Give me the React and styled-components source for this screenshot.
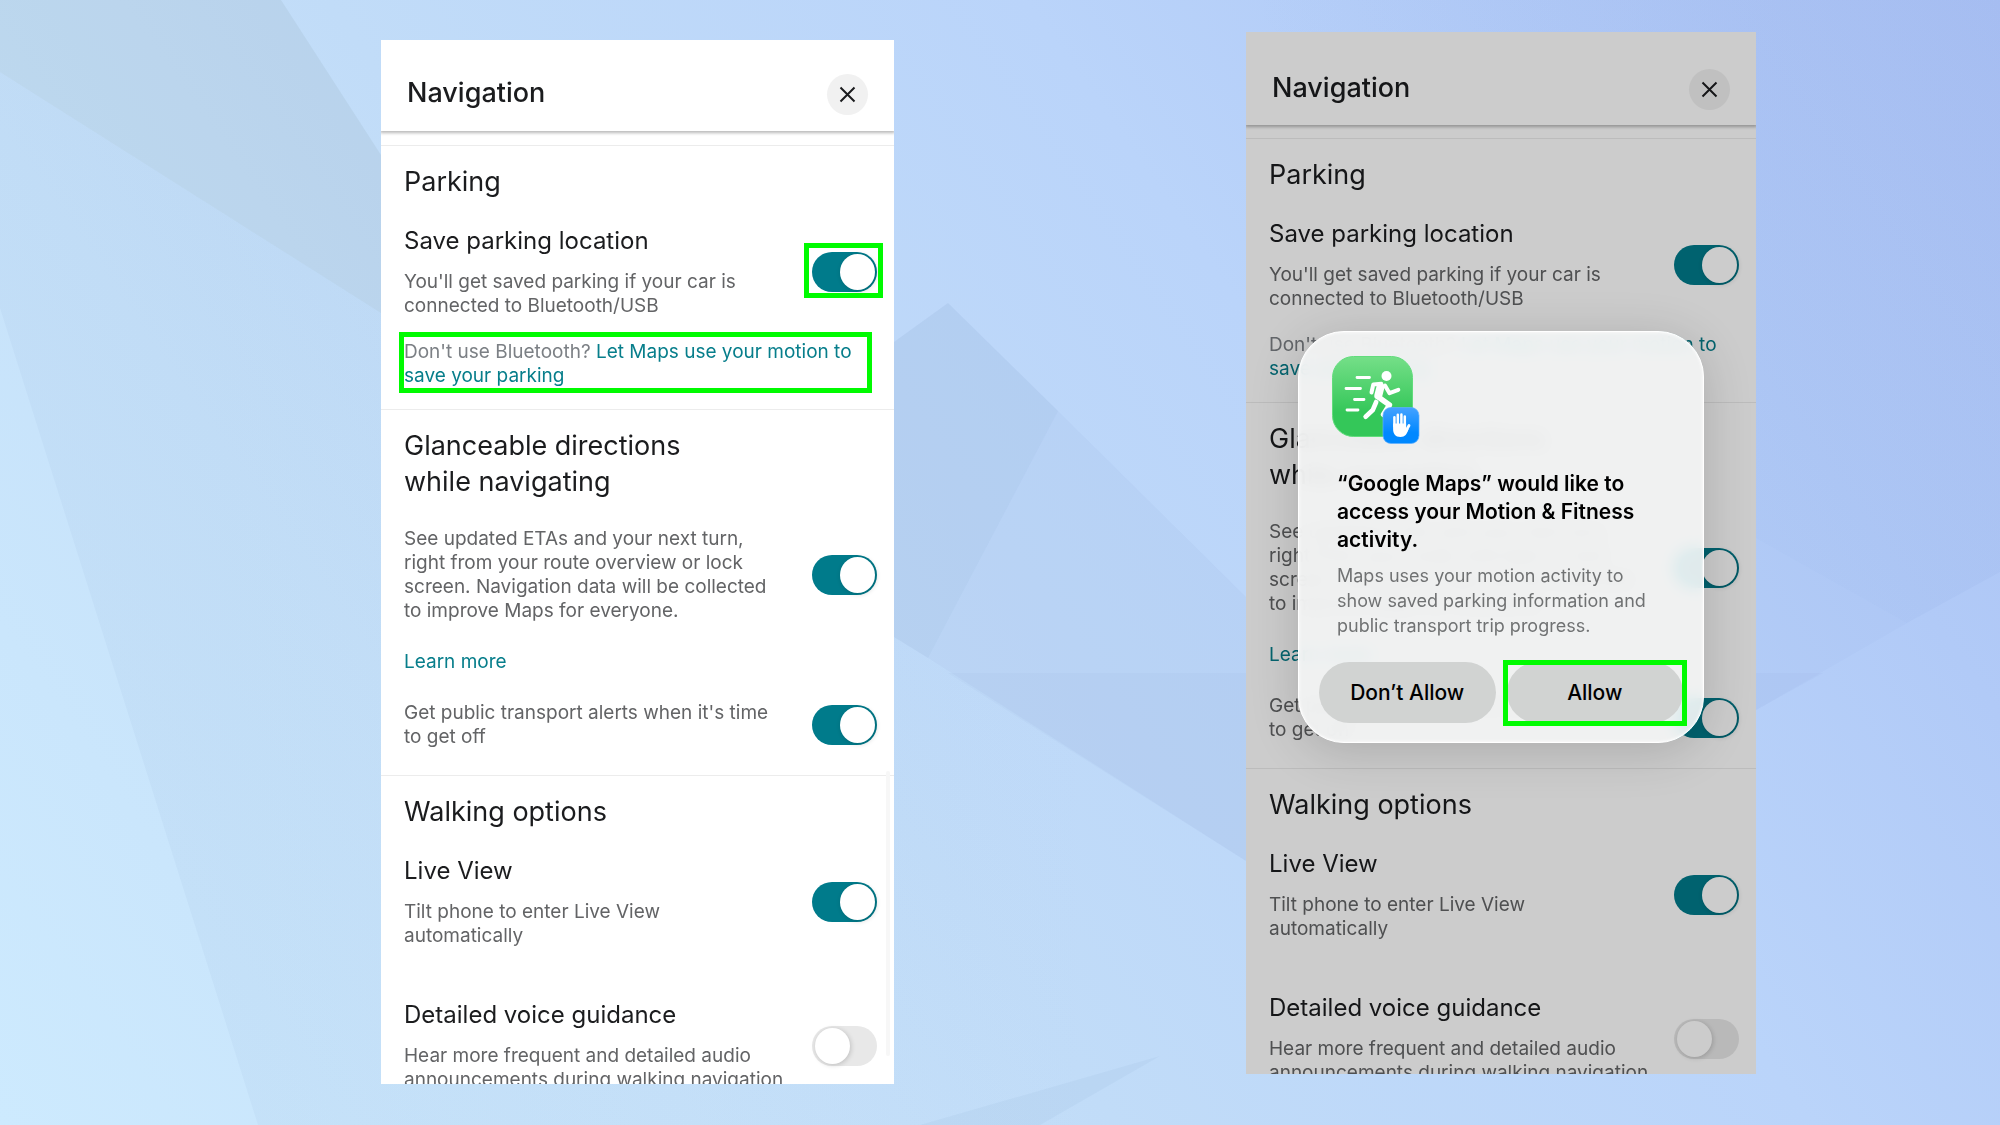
import React, { useId, useState } from "react";
import styled, { createGlobalStyle, css } from "styled-components";

const GlobalStyle = createGlobalStyle`
  *, *::before, *::after { box-sizing: border-box; }
  body { margin: 0; }
  h1, h2, h3, p { margin: 0; font-weight: 400; }
`;

const highlightFrame = css`
  &::after {
    content: "";
    position: absolute;
    border: 5px solid #00fb00;
    pointer-events: none;
  }
`;

const Stage = styled.main`
  position: relative;
  display: grid;
  grid-template-columns: 513fr 510fr;
  column-gap: 25.6%;
  height: 100vh;
  padding: 0 12.2% 0 19.05%;
  overflow: hidden;
  background: linear-gradient(55deg, #cdeafe 0%, #c7e2fa 25%, #c1dcf8 40%, #bad4fa 65%, #b1caf7 82%, #aac1f4 100%);
  color: #1b1c1e;
  font-family: Inter, Roboto, "Liberation Sans", sans-serif;
`;

const Backdrop = styled.svg`
  position: absolute;
  inset: 0;
  width: 100%;
  height: 100%;
`;

const Screen = styled.section`
  position: relative;
  min-height: 0;
  margin: ${(p) => (p.$lifted ? "32px 0 51px" : "40px 0 41px")};
  overflow: hidden;
  background: #fff;
`;

const Header = styled.header`
  display: flex;
  justify-content: space-between;
  align-items: flex-start;
  padding: ${(p) => (p.$tall ? "37px 26px 15px" : "34px 26px 16px")};
  box-shadow: 0 1px 3px 1px rgba(0, 0, 0, 0.28);
`;

const Title = styled.h1`
  font-size: 27px;
  line-height: 38px;
  font-weight: 500;
`;

const CloseButton = styled.button`
  display: grid;
  place-items: center;
  width: 41px;
  height: 41px;
  padding: 0;
  border: 0;
  border-radius: 50%;
  background: #f1f1f1;
  color: #1b1c1e;
`;

const Body = styled.div`
  padding-top: ${(p) => (p.$tall ? 13 : 14)}px;
`;

const Section = styled.section`
  display: flex;
  flex-direction: column;
  gap: ${(p) => p.$gap}px;
  padding: 18px 17px ${(p) => p.$end}px 23px;
  border-top: 1px solid #ececec;
`;

const Group = styled.div`
  display: flex;
  flex-direction: column;
  gap: ${(p) => p.$gap}px;
`;

const Heading = styled.h2`
  font-size: 27px;
  line-height: 36px;
  white-space: pre-line;
`;

const Row = styled.div`
  display: grid;
  grid-template-columns: 1fr 65px;
  align-items: center;
`;

const RowLabel = styled.label`
  display: block;
  margin-bottom: 13px;
  font-size: 24px;
  line-height: 32px;
`;

const Description = styled.p`
  color: #636466;
  font-size: 19px;
  line-height: 24px;
  white-space: pre-line;
`;

const TextLink = styled.a`
  color: #077e8b;
  font-size: 19px;
  line-height: 24px;
  text-decoration: none;
`;

const MotionPrompt = styled.p`
  position: relative;
  color: #7c8085;
  font-size: 19px;
  line-height: 24px;
  ${(p) => p.$marked && highlightFrame}
  &::after { inset: -8px 5px -5px -5px; }
`;

const ToggleFrame = styled.span`
  position: relative;
  display: block;
  ${(p) => p.$marked && highlightFrame}
  &::after { inset: -9px -6px -6px -8px; }
`;

const ToggleInput = styled.input`
  appearance: none;
  display: block;
  width: 65px;
  height: 40px;
  margin: 0;
  padding: 2px 3px;
  border-radius: 20px;
  background: #e8e8e8;

  &::before {
    content: "";
    display: block;
    width: 35px;
    height: 36px;
    border-radius: 50%;
    background: #fff;
    box-shadow: 1px 1px 5px rgba(0, 0, 0, 0.18);
  }
  &:checked { background: #007b8b; }
  &:checked::before { margin-left: 25px; }
`;

const ScrollThumb = styled.div`
  position: absolute;
  right: 4px;
  top: 70%;
  width: 4px;
  height: 27.3%;
  border-radius: 2px;
  background: #f7f7f7;
`;

const Scrim = styled.div`
  position: absolute;
  inset: 0;
  background: rgba(0, 0, 0, 0.2);
`;

const Dialog = styled.div`
  position: absolute;
  top: 299px;
  left: 52px;
  right: 52px;
  padding: 24px 20px 19px;
  border: 1px solid #fff;
  border-radius: 46px;
  background: rgba(243, 244, 244, 0.92);
  backdrop-filter: blur(8px) saturate(2);
  box-shadow: 0 8px 50px rgba(0, 0, 0, 0.16), inset 0 0 3px #fff;
  color: #000;
`;

const DialogIcon = styled.svg`
  display: block;
  width: 88px;
  height: 88px;
  margin-left: 13px;
`;

const DialogCopy = styled.div`
  display: flex;
  flex-direction: column;
  gap: 9px;
  padding: 26px 18px 24px;
`;

const DialogTitle = styled.h3`
  font-size: 21px;
  line-height: 28px;
  font-weight: 600;
`;

const DialogText = styled.p`
  color: #707273;
  font-size: 18px;
  line-height: 25px;
`;

const DialogActions = styled.div`
  display: grid;
  grid-template-columns: 1fr 1fr;
  gap: 11px;
`;

const DialogButton = styled.button`
  position: relative;
  height: 61px;
  padding: 0;
  border: 0;
  border-radius: 31px;
  background: #d1d3d2;
  color: #000;
  font-family: inherit;
  font-size: 21px;
  font-weight: 500;
  ${(p) => p.$marked && highlightFrame}
  &::after { inset: -2px -4px -3px -4px; }
`;

function Toggle({ id, initial, marked, name }) {
  const [on, setOn] = useState(initial);
  return (
    <ToggleFrame $marked={marked}>
      <ToggleInput
        id={id}
        type="checkbox"
        role="switch"
        aria-label={name}
        checked={on}
        onChange={(e) => setOn(e.target.checked)}
      />
    </ToggleFrame>
  );
}

function Setting({ title, text, on = true, marked = false }) {
  const id = useId();
  return (
    <Row>
      <div>
        {title && <RowLabel htmlFor={id}>{title}</RowLabel>}
        <Description as={title ? "p" : "label"} htmlFor={title ? undefined : id}>{text}</Description>
      </div>
      <Toggle id={id} initial={on} marked={marked} name={title} />
    </Row>
  );
}

function NavigationSettings({ marked = false, tall = false }) {
  return (
    <>
      <Header $tall={tall}>
        <Title>Navigation</Title>
        <CloseButton type="button" aria-label="Close">
          <svg width="17" height="17" viewBox="0 0 17 17" fill="none" stroke="currentColor" strokeWidth="2">
            <path d="M1.5 1.5l14 14M15.5 1.5l-14 14" />
          </svg>
        </CloseButton>
      </Header>
      <Body $tall={tall}>
        <Section $gap={25} $end={21}>
          <Heading>Parking</Heading>
          <Group $gap={22}>
            <Setting
              title="Save parking location"
              text={"You'll get saved parking if your car is\nconnected to Bluetooth/USB"}
              marked={marked}
            />
            <MotionPrompt $marked={marked}>
              Don't use Bluetooth? <TextLink href="#motion">Let Maps use your motion to save your parking</TextLink>
            </MotionPrompt>
          </Group>
        </Section>
        <Section $gap={27} $end={26}>
          <Heading>{"Glanceable directions\nwhile navigating"}</Heading>
          <Setting
            text={
              "See updated ETAs and your next turn,\nright from your route overview or lock\nscreen. Navigation data will be collected\nto improve Maps for everyone."
            }
          />
          <TextLink href="#learn-more">Learn more</TextLink>
          <Setting text={"Get public transport alerts when it's time\nto get off"} />
        </Section>
        <Section $gap={25} $end={26}>
          <Heading>Walking options</Heading>
          <Group $gap={51}>
            <Setting title="Live View" text={"Tilt phone to enter Live View\nautomatically"} />
            <Setting
              title="Detailed voice guidance"
              text={"Hear more frequent and detailed audio\nannouncements during walking navigation"}
              on={false}
            />
          </Group>
        </Section>
      </Body>
    </>
  );
}

function MotionIcon() {
  return (
    <DialogIcon viewBox="0 0 88 88" aria-hidden="true">
      <defs>
        <linearGradient id="green" x1="0" y1="0" x2="0" y2="1">
          <stop offset="0" stopColor="#75df88" />
          <stop offset="0.7" stopColor="#34c759" />
          <stop offset="1" stopColor="#34c759" />
        </linearGradient>
        <linearGradient id="blue" x1="0" y1="0" x2="0" y2="1">
          <stop offset="0" stopColor="#45a2ff" />
          <stop offset="0.7" stopColor="#0088ff" />
        </linearGradient>
      </defs>
      <rect x="0.5" y="0.5" width="80" height="80" rx="21" fill="url(#green)" stroke="#62dc7c" />
      <g fill="none" stroke="#fff" strokeLinecap="round" strokeLinejoin="round">
        <path strokeWidth="2.8" d="M25 21.5h12.5M14 32.5h14.5M22.5 43.5h9.5M15 54h11" />
        <path strokeWidth="4" d="M39.5 36.5l1.8-8 8-.8M53 29.5l4.5 7.7 8.8-3.4" />
        <path strokeWidth="8" d="M48.5 31l-2.2 8.5" />
        <path strokeWidth="5.4" d="M47 41.5l10.5 7.5-6 9.5" />
        <path strokeWidth="4.6" d="M44.2 46l-3.4 8-7.2 6.7" />
      </g>
      <circle cx="54.5" cy="20" r="5" fill="#fff" />
      <rect x="51" y="51.5" width="36" height="36" rx="8" fill="url(#blue)" stroke="#5fb0ff" strokeWidth="0.7" />
      <g fill="none" stroke="#fff" strokeLinecap="round" strokeWidth="2.5">
        <path d="M62.4 61.2v9M65.8 58.8v11M69.4 58.6v11M72.8 60.6v10" />
        <path strokeWidth="2.8" d="M73.6 75.5l3.4-6" />
      </g>
      <path fill="#fff" d="M61.1 67.5h13v4.5l2.5 1c-1.500 5-3.600 8-8.100 8-5.200 0-7.400-3.400-7.400-8z" />
    </DialogIcon>
  );
}

function Facets() {
  return (
    <Backdrop viewBox="0 0 2000 1125" preserveAspectRatio="none" aria-hidden="true">
      <defs>
        <linearGradient id="slope" gradientUnits="userSpaceOnUse" x1="0" y1="0" x2="1100" y2="0">
          <stop offset="0.2" stopColor="#7d9cc8" stopOpacity="0.08" />
          <stop offset="1" stopColor="#7d9cc8" stopOpacity="0" />
        </linearGradient>
        <linearGradient id="corner" gradientUnits="userSpaceOnUse" x1="1246" y1="0" x2="1756" y2="0">
          <stop offset="0" stopColor="#6c89cc" stopOpacity="0" />
          <stop offset="1" stopColor="#6c89cc" stopOpacity="0.07" />
        </linearGradient>
      </defs>
      <path fill="#8fa9b4" opacity="0.17" d="M0 0H281L381 155 700 513 381 313 0 72z" />
      <path fill="url(#slope)" d="M0 308L0 72 381 313 894 637 1246 861V1125H258z" />
      <path fill="#5f7fb0" opacity="0.1" d="M894 342L948 303 1058 411 928 658 894 637z" />
      <path fill="#5f7fb0" opacity="0.05" d="M1058 411L1246 597V861L928 658z" />
      <path fill="#5f7fb0" opacity="0.04" d="M948 673H1246V861z" />
      <path fill="#7393c4" opacity="0.08" d="M920 1125L1160 1056 1040 1125z" />
      <path fill="url(#corner)" d="M1246 0H2000V572L1907 623 1756 538z" />
      <path fill="#6c89cc" opacity="0.03" d="M1756 538L1907 623 1756 710z" />
      <path fill="#6c89cc" opacity="0.05" d="M1756 673H1823L1756 710z" />
    </Backdrop>
  );
}

export default function App() {
  return (
    <>
      <GlobalStyle />
      <Stage>
        <Facets />
        <Screen>
          <NavigationSettings marked />
          <ScrollThumb />
        </Screen>
        <Screen $lifted>
          <NavigationSettings tall />
          <Scrim />
          <Dialog role="dialog" aria-labelledby="motion-title" aria-describedby="motion-text">
            <MotionIcon />
            <DialogCopy>
              <DialogTitle id="motion-title">“Google Maps” would like to access your Motion &amp; Fitness activity.</DialogTitle>
              <DialogText id="motion-text">
                Maps uses your motion activity to show saved parking information and public transport trip progress.
              </DialogText>
            </DialogCopy>
            <DialogActions>
              <DialogButton type="button">Don’t Allow</DialogButton>
              <DialogButton type="button" $marked>Allow</DialogButton>
            </DialogActions>
          </Dialog>
        </Screen>
      </Stage>
    </>
  );
}
